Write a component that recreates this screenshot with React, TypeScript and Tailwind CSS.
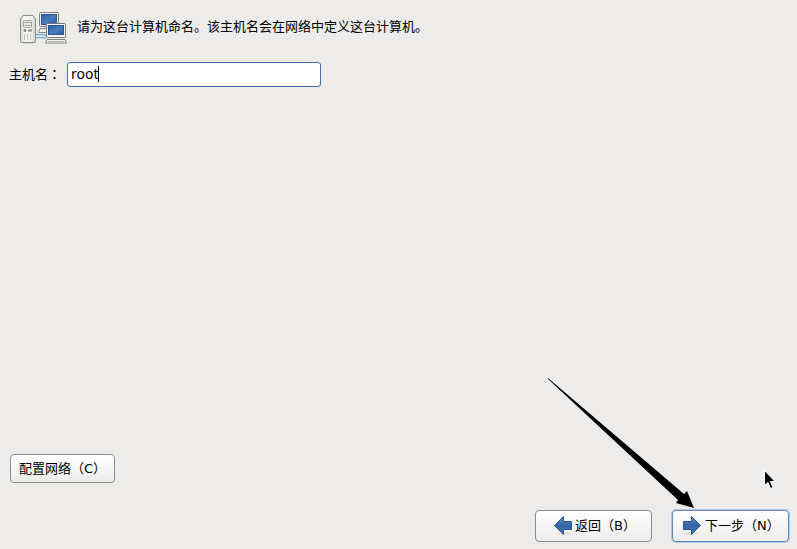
import type { ReactNode } from "react";

function NetworkIcon() {
  return (
    <svg width="48" height="34" viewBox="0 -1 48 34" aria-hidden="true" className="shrink-0">
      <defs>
        <linearGradient id="screen" x1="0" y1="0" x2="1" y2="1">
          <stop offset="0" stopColor="#2a5c9f" />
          <stop offset="0.5" stopColor="#4a7dbd" />
          <stop offset="1" stopColor="#2a5c9f" />
        </linearGradient>
        <linearGradient id="tower" x1="0" y1="0" x2="1" y2="0">
          <stop offset="0" stopColor="#d3d3cf" />
          <stop offset="0.25" stopColor="#f4f4f2" />
          <stop offset="0.75" stopColor="#f0f0ee" />
          <stop offset="1" stopColor="#c9c9c5" />
        </linearGradient>
      </defs>
      <rect x="20.5" y="1.5" width="19" height="14" rx="1" fill="#f4f4f2" stroke="#80827e" />
      <rect x="22.5" y="3.5" width="15" height="10" fill="url(#screen)" stroke="#2b5691" />
      <path d="M21 17.5h18l1.500 4h-21z" fill="#eeeeec" stroke="#858782" />
      <path d="M15 23.5h9l3 1M15 26.5h9l3 1" fill="none" stroke="#7fb0de" strokeWidth="1.4" />
      <ellipse cx="9" cy="31.500" rx="8" ry="1.300" fill="#c9c9c7" />
      <path d="M1.500 30V8L4 4.500h10L16.500 8v22l-1 1.500h-13z" fill="url(#tower)" stroke="#8b8d88" />
      <rect x="4.500" y="9.500" width="8" height="7" rx="1" fill="#e4e4e0" stroke="#a3a5a0" />
      <path d="M5.500 11.500h6M5.500 14.500h6" stroke="#a9aba6" />
      <circle cx="6" cy="19.500" r="1.400" fill="#858782" />
      <path d="M9 19.500h4" stroke="#858782" strokeWidth="2" />
      <path d="M5.500 23v6M8.500 23v6M11.500 23v6" stroke="#c0c2bd" />
      <rect x="27.500" y="12.500" width="19" height="14" rx="1" fill="#f6f6f4" stroke="#757773" />
      <rect x="29.500" y="14.500" width="15" height="9" fill="url(#screen)" stroke="#2b5691" />
      <path d="M28 28.500h18l1.500 3.500h-21z" fill="#eeeeec" stroke="#858782" />
      <path d="M29 30.500h16" stroke="#babcb7" />
    </svg>
  );
}

function ArrowIcon({ direction }: { direction: "left" | "right" }) {
  return (
    <svg
      width="20"
      height="20"
      viewBox="0 0 20 20"
      aria-hidden="true"
      className={direction === "left" ? "shrink-0 -scale-x-100" : "shrink-0"}
    >
      <defs>
        <linearGradient id={`arrow-${direction}`} x1="0" y1="0" x2="0" y2="1">
          <stop offset="0" stopColor="#5b8dc8" />
          <stop offset="0.5" stopColor="#3465a4" />
          <stop offset="1" stopColor="#4377b8" />
        </linearGradient>
      </defs>
      <ellipse cx="9" cy="17.500" rx="8" ry="1.500" fill="#dddddb" />
      <path
        d="M1.500 5.500h8v-5l9 9-9 9v-5h-8z"
        fill={`url(#arrow-${direction})`}
        stroke="#2a5590"
        strokeLinejoin="round"
      />
    </svg>
  );
}

function Button({ children, focused = false, className }: { children: ReactNode; focused?: boolean; className: string }) {
  return (
    <button
      type="button"
      className={`flex items-center rounded-[4px] border bg-linear-to-b from-white to-[#ececeb] whitespace-nowrap ${
        focused ? "border-[#6288b8] shadow-[0_0_0_1px_#b5c9e3]" : "border-[#8d8c8a]"
      } ${className}`}
    >
      {children}
    </button>
  );
}

export default function App() {
  return (
    <main className="flex min-h-screen flex-col bg-[#edeceb] font-['DejaVu_Sans','Noto_Sans_CJK_SC',sans-serif] text-[13px] leading-4 text-black">
      <header className="flex items-center gap-[10px] pt-[10px] pl-[19px]">
        <NetworkIcon />
        <p>请为这台计算机命名。该主机名会在网络中定义这台计算机。</p>
      </header>
      <div className="flex items-center pt-[18px] pl-[9px]">
        <label htmlFor="hostname" className="w-[58px]">
          主机名<span className="font-['Noto_Sans_CJK_TC',sans-serif]" lang="zh-TW">：</span>
        </label>
        <div className="relative">
          <input
            id="hostname"
            type="text"
            defaultValue="root"
            className="block h-[25px] w-[254px] rounded-[3px] border border-[#3f6fa8] bg-white px-[3px] pb-[2px] font-['Noto_Sans',sans-serif] text-[14px] caret-transparent outline-none"
          />
          <span aria-hidden="true" className="absolute top-1 left-[31px] h-4 w-px bg-black" />
        </div>
      </div>
      <div className="mt-auto flex pb-[27px] pl-[10px]">
        <Button className="h-[29px] px-2">配置网络（C）</Button>
      </div>
      <footer className="flex justify-end gap-5 pr-2 pb-[7px]">
        <Button className="h-8 w-[117px] gap-[2px] pl-[17px]">
          <ArrowIcon direction="left" />
          返回（B）
        </Button>
        <div className="relative">
          <Button focused className="h-8 w-[117px] gap-[3px] pl-[9px]">
            <ArrowIcon direction="right" />
            下一步（N）
          </Button>
          <svg
            width="148"
            height="132"
            viewBox="0 0 148 132"
            aria-hidden="true"
            className="pointer-events-none absolute right-[93px] bottom-8"
          >
            <path d="M0 0L136 116L139 113L146 130L128 125L130 122L0 1Z" fill="#000" />
          </svg>
          <svg
            width="12"
            height="20"
            viewBox="0 0 12 20"
            aria-hidden="true"
            className="pointer-events-none absolute right-[13px] bottom-[52px]"
          >
            <path d="M0.500 0.500v15l3.500-3 2.500 6 2.500-1-2.500-6h4.500z" fill="#000" stroke="#fff" />
          </svg>
        </div>
      </footer>
    </main>
  );
}
